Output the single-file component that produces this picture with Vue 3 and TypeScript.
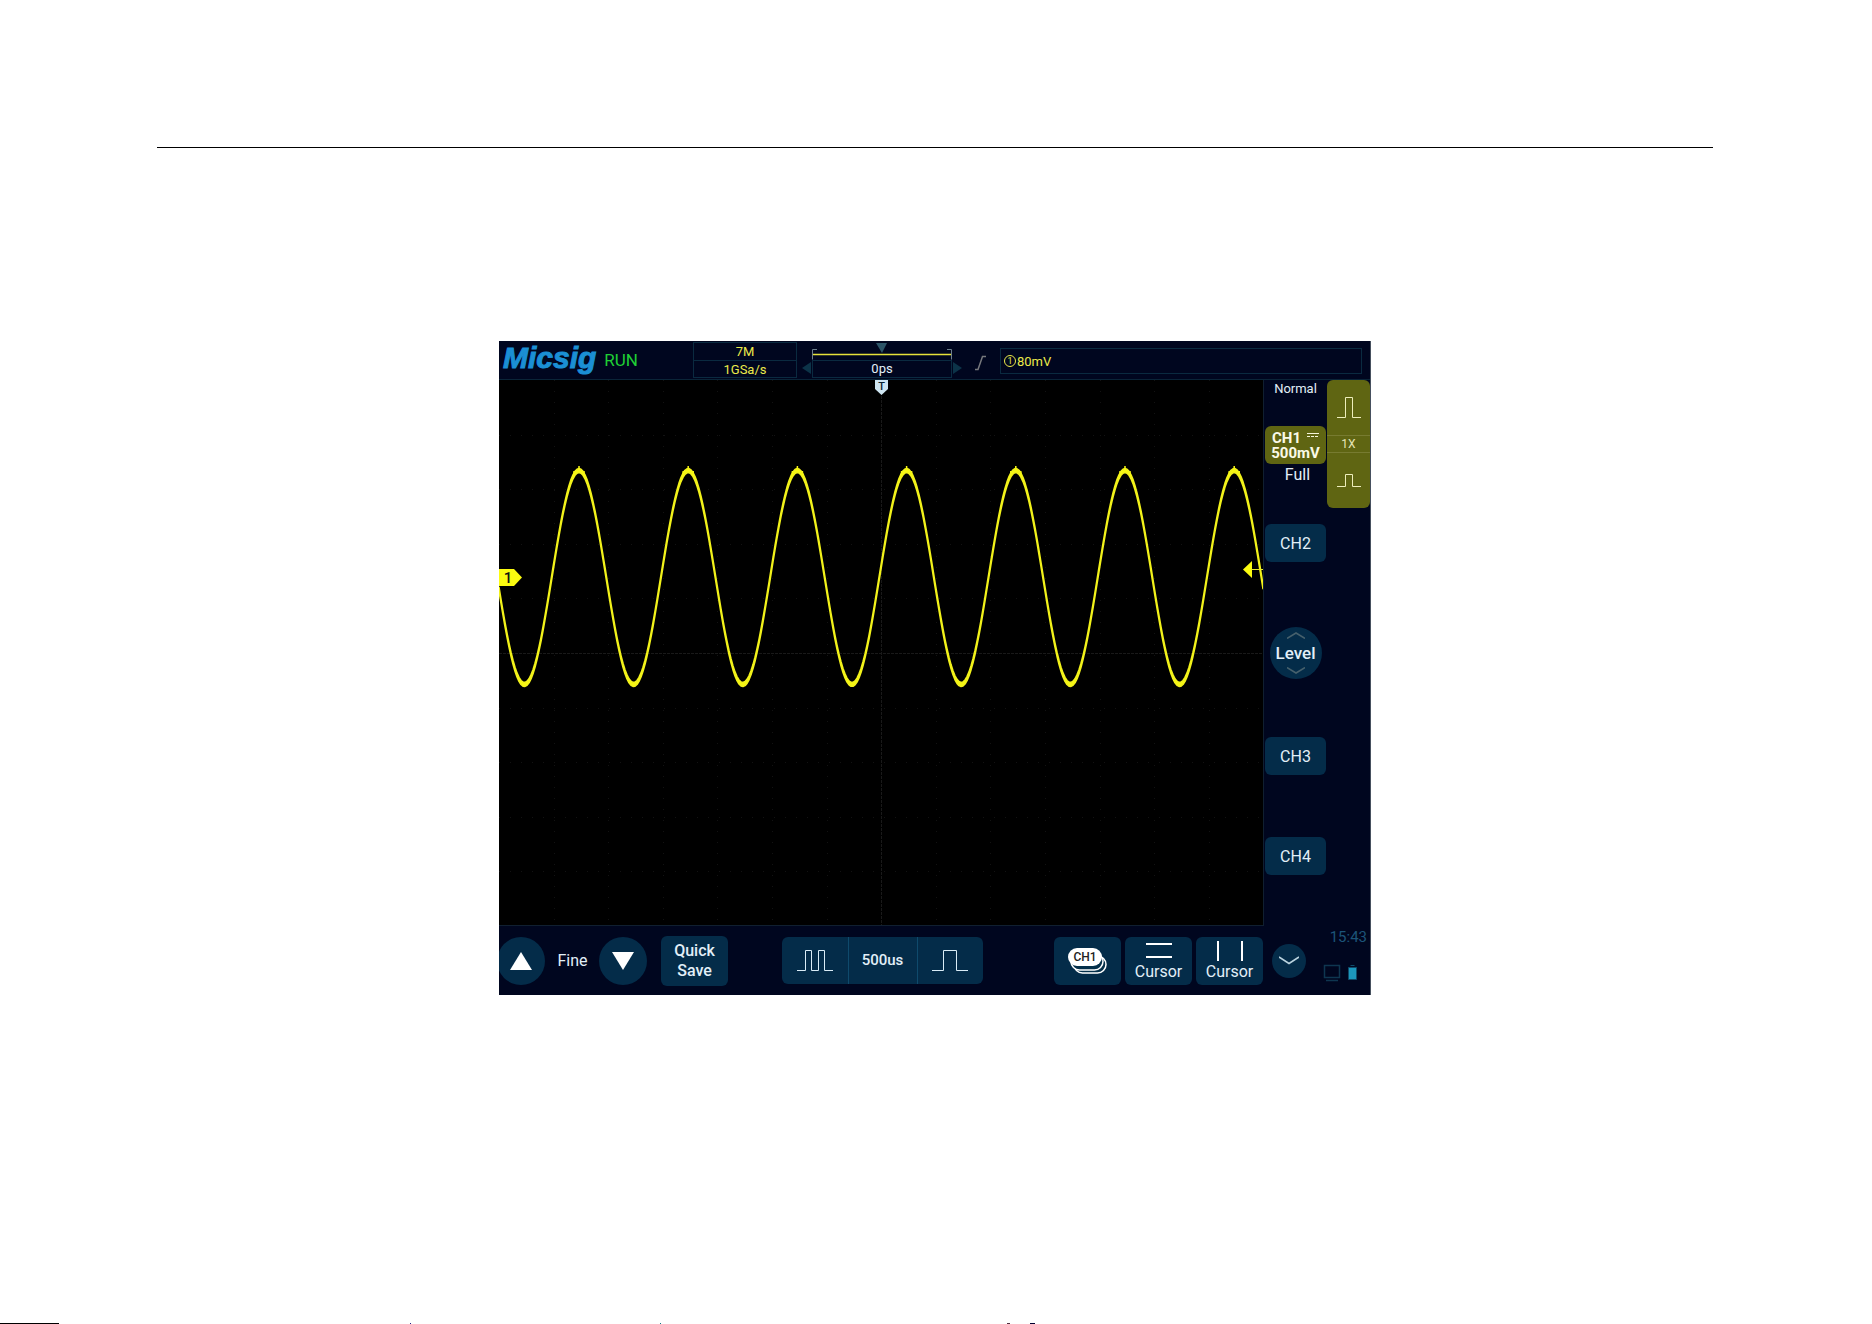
<script setup lang="ts">
const plotWidth = 764
const plotHeight = 545
const period = 109.2
const firstPeak = 80
const amplitude = 107
const middle = 197.5
const noise = 2

function level(x: number): number {
  return middle - amplitude * Math.cos((2 * Math.PI * (x - firstPeak)) / period)
}

// The trace is a band: thin on the slopes, thick at the crests.
function tracePath(): string {
  const top: string[] = []
  const bottom: string[] = []
  for (let x = 0; x <= plotWidth; x += 2) {
    const y = level(x)
    top.push(`${x} ${(y - noise).toFixed(1)}`)
    bottom.unshift(`${x} ${(y + noise).toFixed(1)}`)
  }
  return `M${top.join('L')}L${bottom.join('L')}Z`
}

const trace = tracePath()
const crests = [0, 1, 2, 3, 4, 5, 6].map((n) => firstPeak + n * period)
const columns = Array.from({ length: 13 }, (_, n) => Math.round((n + 1) * 54.6) + 0.5).filter((_, n) => n !== 6)
const rows = Array.from({ length: 9 }, (_, n) => Math.round((n + 1) * 54.6) + 0.5).filter((_, n) => n !== 4)
</script>

<template>
  <main class="page">
    <hr class="rule" />
    <section class="scope" aria-label="Oscilloscope">
      <header class="top">
        <div class="brand">
          <span class="logo">Micsig</span>
          <span class="run">RUN</span>
        </div>
        <div class="acq">
          <div>7M</div>
          <div>1GSa/s</div>
        </div>
        <div class="time">
          <svg class="range" width="140" height="19" viewBox="0 0 140 19">
            <path d="M64 2h11l-5 10z" fill="#2c5468" />
            <path d="M5 8.500H.5v10M135 8.500h4.500v10" fill="none" stroke="#6d7f8c" />
            <path d="M1 13.500h138" stroke="#e6e23a" stroke-width="1.500" />
          </svg>
          <div class="offset">
            <svg width="11" height="16" viewBox="0 0 11 16"><path d="M10 2v12L1 8z" fill="#0c3348" /></svg>
            <div class="ps">0ps</div>
            <svg width="11" height="16" viewBox="0 0 11 16"><path d="M1 2v12l9-6z" fill="#0c3348" /></svg>
          </div>
        </div>
        <svg class="slope" width="12" height="16" viewBox="0 0 12 16">
          <path d="M0 14.500h3L7.500 1.500H11" fill="none" stroke="#76787c" stroke-width="1.500" />
        </svg>
        <div class="trigger"><span class="source">1</span>80mV</div>
      </header>

      <div class="body">
        <svg class="plot" :viewBox="`0 0 ${plotWidth} ${plotHeight}`">
          <rect width="764" height="546" fill="#000" />
          <g stroke="#121212" stroke-dasharray="1 10">
            <path v-for="x in columns" :key="x" :d="`M${x} 0V546`" />
            <path v-for="y in rows" :key="y" :d="`M0 ${y}H764`" />
          </g>
          <path d="M382.500 0V546M0 273.500H764" stroke="#191919" stroke-dasharray="3 1" />
          <path :d="trace" fill="#f7f713" stroke="#f2f21a" stroke-width="1.600" stroke-linejoin="round" />
          <path v-for="x in crests" :key="x" :d="`M${x} 86v4M${x - 5} 91v5M${x + 5} 91v5`" stroke="#f7f713" stroke-width="1.500" />
          <path d="M376 0h13v9l-6.500 6-6.500-6z" fill="#cfe6f2" />
          <text x="382.500" y="10" class="mark" font-size="11" fill="#0b2230">T</text>
          <path d="M0 189h15l8 8.500-8 8.500H0z" fill="#fbfb10" />
          <text x="9" y="203" class="mark" font-size="15" fill="#111">1</text>
          <path d="M744 189.500l9-8.500v17z" fill="#fbfb10" />
          <path d="M752 189.500h12" stroke="#e8e82a" />
        </svg>

        <aside class="side">
          <div class="channels">
            <span class="mode">Normal</span>
            <button class="ch active">
              <span class="name">CH1
                <svg width="12" height="5" viewBox="0 0 12 5"><path d="M0 .5h12" stroke="#f4f4d8" /><path d="M0 3.500h12" stroke="#f4f4d8" stroke-dasharray="3 1" /></svg>
              </span>
              <span>500mV</span>
            </button>
            <span class="full">Full</span>
            <button class="ch second">CH2</button>
            <button class="level">
              <svg width="18" height="7" viewBox="0 0 18 7"><path d="M0 6.500L9 1l9 5.500" fill="none" stroke="#46606c" stroke-width="1.500" /></svg>
              <span>Level</span>
              <svg width="18" height="7" viewBox="0 0 18 7"><path d="M0 .5L9 6l9-5.500" fill="none" stroke="#46606c" stroke-width="1.500" /></svg>
            </button>
            <button class="ch third">CH3</button>
            <button class="ch fourth">CH4</button>
          </div>
          <div class="scale">
            <button aria-label="Larger">
              <svg width="24" height="22" viewBox="0 0 24 22"><path d="M0 20.500h8.500v-20h7v20H24" fill="none" stroke="#eeeebc" /></svg>
            </button>
            <span class="probe">1X</span>
            <button aria-label="Smaller">
              <svg width="24" height="14" viewBox="0 0 24 14"><path d="M0 12.500h8.500V.5h7v12H24" fill="none" stroke="#eeeebc" /></svg>
            </button>
          </div>
        </aside>
      </div>

      <footer class="bar">
        <button class="round" aria-label="Up">
          <svg width="22" height="18" viewBox="0 0 22 18"><path d="M11 0l11 18H0z" fill="#fff" /></svg>
        </button>
        <span class="fine">Fine</span>
        <button class="round" aria-label="Down">
          <svg width="22" height="18" viewBox="0 0 22 18"><path d="M0 0h22L11 18z" fill="#fff" /></svg>
        </button>
        <button class="tile quick">Quick<br />Save</button>
        <div class="base">
          <button aria-label="Slower">
            <svg width="36" height="22" viewBox="0 0 36 22"><path d="M0 20.500h8.500v-20h6v20h7v-20h6v20H36" fill="none" stroke="#d9ecf6" /></svg>
          </button>
          <span>500us</span>
          <button aria-label="Faster">
            <svg width="36" height="22" viewBox="0 0 36 22"><path d="M0 20.500h11.500v-20h13v20H36" fill="none" stroke="#d9ecf6" /></svg>
          </button>
        </div>
        <button class="tile stack">
          <svg width="40" height="26" viewBox="0 0 40 26">
            <g fill="#05304a" stroke="#fff" stroke-width="1.500">
              <rect x="6" y="8" width="32" height="17" rx="8.500" />
              <rect x="3" y="5" width="32" height="17" rx="8.500" />
            </g>
            <rect x="0" y="0" width="34" height="18" rx="9" fill="#fff" />
            <text x="17" y="13" class="mark" font-size="12" fill="#222">CH1</text>
          </svg>
        </button>
        <button class="tile cursor">
          <svg width="26" height="22" viewBox="0 0 26 22"><path d="M0 4h26M0 17h26" stroke="#fff" stroke-width="2" /></svg>
          <span>Cursor</span>
        </button>
        <button class="tile cursor">
          <svg width="26" height="22" viewBox="0 0 26 22"><path d="M1 1v20M25 1v20" stroke="#fff" stroke-width="2" /></svg>
          <span>Cursor</span>
        </button>
        <button class="more" aria-label="More">
          <svg width="20" height="9" viewBox="0 0 20 9"><path d="M0 1l10 6.500L20 1" fill="none" stroke="#b9d2de" stroke-width="1.500" /></svg>
        </button>
        <div class="status">
          <time>15:43</time>
          <svg width="36" height="18" viewBox="0 0 36 18">
            <path d="M1.500 1.500h15v12h-15zM3 16.500h12" fill="none" stroke="#0e3650" stroke-width="1.500" />
            <path d="M25.500 3.500h8v12h-8zM27.500 1.500h4" fill="#1c97bd" stroke="#0e4a68" />
          </svg>
        </div>
      </footer>
    </section>

    <svg class="edge" width="100%" height="1">
      <rect width="59" height="1" fill="#000" />
      <rect x="410" width="1" height="1" fill="#22228a" />
      <rect x="660" width="1" height="1" fill="#117a8a" />
      <rect x="1007" width="3" height="1" fill="#503040" />
      <rect x="1030" width="5" height="1" fill="#000030" />
    </svg>
  </main>
</template>

<style>
body {
  margin: 0;
  background: #fff;
}
</style>

<style scoped>
.page {
  display: flex;
  flex-direction: column;
  align-items: center;
  min-height: 100vh;
  padding-right: 2px;
  font-family: Roboto, 'Liberation Sans', sans-serif;
}
svg {
  display: block;
  flex: none;
}
button {
  margin: 0;
  padding: 0;
  border: 0;
  background: none;
  color: inherit;
  font: inherit;
}
.rule {
  box-sizing: border-box;
  width: calc(100% - 314px);
  height: 1px;
  margin: 147px 0 193px;
  border: 0;
  background: #000;
}
.scope {
  box-sizing: border-box;
  width: 100%;
  max-width: 872px;
  background: #00061f;
  border-right: 1px solid #46505e;
  color: #e2eff8;
  overflow: hidden;
}
.top {
  display: flex;
  height: 38px;
  border-bottom: 1px solid #0a2438;
}
.brand {
  display: flex;
  width: 194px;
  gap: 8px;
}
.logo {
  padding-left: 4px;
  font: italic bold 30px/34px 'Liberation Sans', sans-serif;
  color: #1b8fd4;
  -webkit-text-stroke: 1px #1b8fd4;
}
.run {
  font-size: 17px;
  line-height: 38px;
  color: #1fcf34;
}
.acq {
  box-sizing: border-box;
  width: 104px;
  height: 36px;
  border: 1px solid #0a2a40;
  margin-top: 1px;
  text-align: center;
  font-size: 13px;
  line-height: 17px;
  color: #ecea4a;
}
.acq div + div {
  border-top: 1px solid #0a2a40;
}
.time {
  display: flex;
  flex-direction: column;
  align-items: center;
  margin-left: 4px;
}
.offset {
  display: flex;
}
.ps {
  box-sizing: border-box;
  width: 140px;
  height: 18px;
  border: 1px solid #0a2a40;
  text-align: center;
  font-size: 13px;
  line-height: 16px;
}
.slope {
  margin: 14px 13px 0 12px;
}
.trigger {
  display: flex;
  flex: 1;
  align-items: center;
  height: 24px;
  margin: 7px 8px 0 0;
  padding-left: 3px;
  border: 1px solid #0a2a40;
  font-size: 13px;
  color: #ecea4a;
}
.source {
  width: 10px;
  height: 10px;
  margin-right: 1px;
  border: 1px solid #ecea4a;
  border-radius: 50%;
  font-size: 9px;
  line-height: 10px;
  text-align: center;
}
.body {
  display: flex;
}
.plot {
  flex: 1;
  min-width: 0;
  border-right: 1px solid #101f30;
  border-bottom: 1px solid #101f30;
}
.mark {
  font-family: Roboto, 'Liberation Sans', sans-serif;
  font-weight: 500;
  text-anchor: middle;
}
.side {
  display: flex;
  width: 106px;
}
.channels {
  display: flex;
  flex-direction: column;
  align-items: center;
  width: 63px;
}
.mode {
  font-size: 13px;
  line-height: 18px;
}
.ch {
  width: 61px;
  height: 38px;
  border-radius: 6px;
  background: #042c49;
  font-size: 16px;
}
.active {
  display: flex;
  flex-direction: column;
  align-items: center;
  justify-content: center;
  margin-top: 28px;
  padding-top: 1px;
  background: #5f6512;
  color: #fafae6;
  font-size: 15px;
  font-weight: 700;
  line-height: 15px;
}
.name {
  display: flex;
  gap: 6px;
}
.name svg {
  margin-top: 2px;
}
.full {
  margin-top: 1px;
  padding-left: 4px;
  font-size: 16px;
  line-height: 20px;
}
.second {
  margin-top: 39px;
}
.level {
  display: flex;
  flex-direction: column;
  align-items: center;
  justify-content: center;
  width: 52px;
  height: 52px;
  margin-top: 65px;
  border-radius: 50%;
  background: #042c49;
  font-size: 17px;
  font-weight: 500;
  line-height: 28px;
}
.third {
  margin-top: 58px;
}
.fourth {
  margin-top: 62px;
}
.scale {
  display: flex;
  flex-direction: column;
  width: 43px;
  height: 128px;
  border-radius: 6px;
  background: #5f6512;
  color: #e6e6b8;
}
.scale button {
  display: flex;
  flex: 1;
  align-items: center;
  justify-content: center;
}
.probe {
  border: solid #777b30;
  border-width: 1px 0;
  text-align: center;
  font-size: 12px;
  line-height: 16px;
}
.bar {
  display: flex;
  align-items: center;
  height: 69px;
}
.round,
.more {
  display: flex;
  align-items: center;
  justify-content: center;
  width: 48px;
  height: 48px;
  border-radius: 50%;
  background: #042c49;
}
.round:first-child {
  margin-left: -2px;
}
.fine {
  width: 54px;
  padding-left: 1px;
  box-sizing: border-box;
  text-align: center;
  font-size: 16px;
}
.tile {
  display: flex;
  flex-direction: column;
  align-items: center;
  justify-content: center;
  width: 67px;
  height: 48px;
  border-radius: 6px;
  background: #042c49;
  font-size: 16px;
}
.quick {
  display: block;
  height: 50px;
  margin-left: 14px;
  font-weight: 500;
  line-height: 20px;
}
.base {
  display: flex;
  align-items: center;
  width: 201px;
  height: 47px;
  margin-left: 54px;
  border-radius: 6px;
  background: #042c49;
}
.base button {
  display: flex;
  flex: 1;
  align-items: center;
  justify-content: center;
}
.base span {
  width: 68px;
  border: solid #0f4a6c;
  border-width: 0 1px;
  text-align: center;
  font-size: 15px;
  font-weight: 500;
  line-height: 47px;
}
.stack {
  margin-left: auto;
}
.cursor {
  margin-left: 4px;
  line-height: 20px;
}
.more {
  width: 34px;
  height: 34px;
  margin-left: 9px;
}
.status {
  display: flex;
  flex-direction: column;
  align-items: flex-end;
  gap: 18px;
  width: 58px;
  padding: 0 3px 12px 3px;
  font-size: 15px;
  line-height: 18px;
  color: #1c5478;
}
.status svg {
  margin-right: 8px;
}
.edge {
  margin-top: auto;
}
</style>
